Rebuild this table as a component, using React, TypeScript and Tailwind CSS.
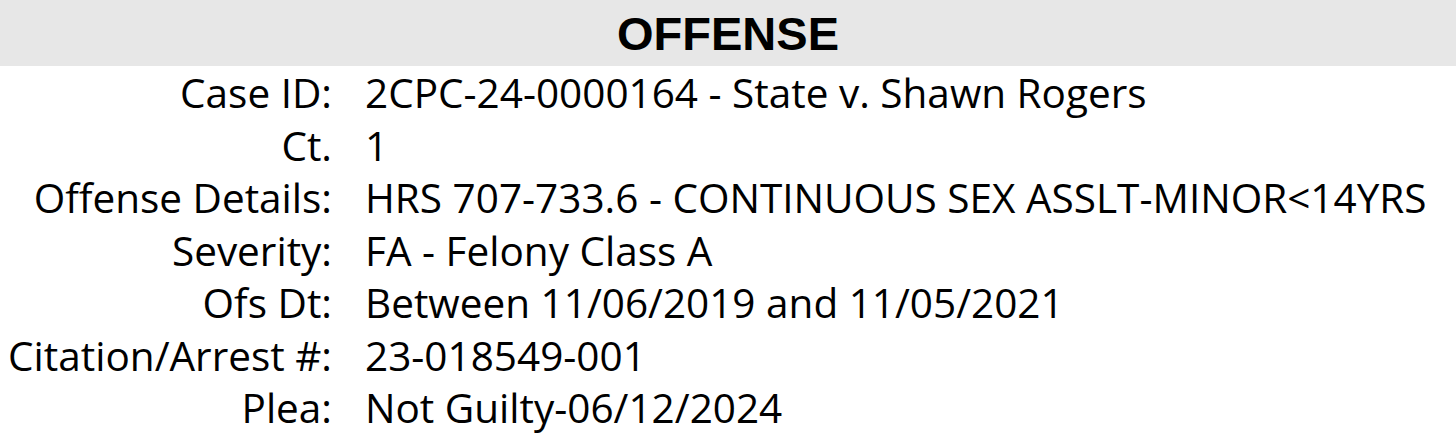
const ROWS: [string, string][] = [
  ['Case ID:', '2CPC-24-0000164 - State v. Shawn Rogers'],
  ['Ct.', '1'],
  ['Offense Details:', 'HRS 707-733.6 - CONTINUOUS SEX ASSLT-MINOR<14YRS'],
  ['Severity:', 'FA - Felony Class A'],
  ['Ofs Dt:', 'Between 11/06/2019 and 11/05/2021'],
  ['Citation/Arrest #:', '23-018549-001'],
  ['Plea:', 'Not Guilty-06/12/2024'],
];

export default function App() {
  return (
    <div className="w-[1456px] h-[434px] bg-white text-black overflow-hidden font-['Open_Sans',sans-serif]">
      {/* header band */}
      <div className="h-[66px] bg-[#e7e7e7] flex items-center justify-center">
        <h1 className="text-[47px] font-bold leading-none font-['Liberation_Sans',sans-serif]">OFFENSE</h1>
      </div>
      <div className="pt-[1px]">
        {ROWS.map(([label, value]) => (
          <div key={label} className="flex h-[52.5px] items-center text-[40.5px] leading-none">
            <span className="w-[332px] text-right shrink-0 whitespace-nowrap">{label}</span>
            <span className="ml-[33px] whitespace-nowrap">{value}</span>
          </div>
        ))}
      </div>
    </div>
  );
}
